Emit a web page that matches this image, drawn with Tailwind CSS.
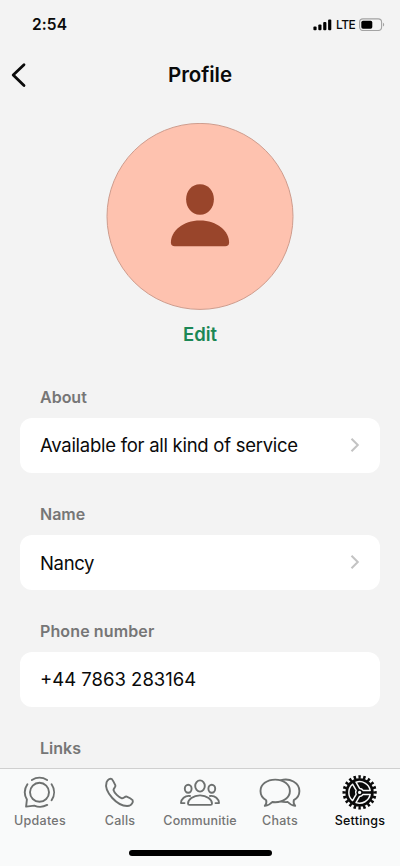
<!DOCTYPE html>
<html lang="en">
<head>
<meta charset="utf-8">
<title>Profile</title>
<script src="https://cdn.jsdelivr.net/npm/@tailwindcss/browser@4"></script>
</head>
<body class="bg-[#f3f3f3] text-[#0a0a0a] font-['Inter','Liberation_Sans',sans-serif]">
<div class="flex h-[866px] w-[400px] flex-col overflow-hidden">
  <header class="flex h-[49px] shrink-0 items-center justify-between pr-[15px] pl-8">
    <span class="text-[15.5px] leading-5 font-semibold tracking-[0.1px]">2:54</span>
    <div class="flex items-center gap-1">
      <svg class="h-3 w-[19px]" viewBox="0 0 19 12"><rect x="0.4" y="7.6" width="3.2" height="3.7" rx="1"/><rect x="5.3" y="5.6" width="3.2" height="5.7" rx="1"/><rect x="10.2" y="3" width="3.2" height="8.3" rx="1"/><rect x="15.1" y="0.5" width="3.2" height="10.8" rx="1"/></svg>
      <span class="w-[19px] text-[12px] leading-4 font-medium tracking-[-0.5px]">LTE</span>
      <svg class="h-[13px] w-[26px]" viewBox="0 0 26 13" fill="none"><rect x="0.6" y="0.9" width="22" height="11.6" rx="3.4" stroke="#a3a3a3" stroke-width="1.1"/><rect x="2.3" y="2.7" width="11" height="8" rx="1.7" fill="#000"/><path d="M24 4.8c1.6.7 1.6 3.1 0 3.8z" fill="#a3a3a3"/></svg>
    </div>
  </header>
  <nav class="grid h-[52px] shrink-0 grid-cols-3 items-center px-2.5">
    <svg class="h-[26px] w-[18px]" viewBox="0 0 18 26" fill="none" stroke="#0a0a0a" stroke-width="2.8" stroke-linecap="round" stroke-linejoin="round"><path d="M14 2.8 3.2 13 14 23.6"/></svg>
    <h1 class="text-center text-[20.5px] leading-6 font-semibold tracking-[-0.05px]">Profile</h1>
  </nav>
  <section class="flex shrink-0 flex-col items-center pt-[22px]">
    <svg class="h-[188px] w-[188px]" viewBox="0 0 188 188"><circle cx="94" cy="93.4" r="93" fill="#fec2af" stroke="#ce9c8d" stroke-width="1"/><g fill="#99452b" transform="translate(.5 .2)"><path d="M93.5 61C102 61 107.4 67.8 107.4 76S102 91.6 93.5 91.6 79.6 84.2 79.6 76 85 61 93.5 61z"/><path d="M93.5 97.4C110.5 97.4 122.6 108 122.6 119.2Q122.6 123 118.7 123H68.3Q64.4 123 64.4 119.2C64.4 108 76.5 97.4 93.5 97.4z"/></g></svg>
    <button class="mt-[11px] text-[18.5px] leading-6 font-semibold text-[#1b8755]">Edit</button>
  </section>
  <main class="flex min-h-0 flex-1 flex-col overflow-hidden px-5 pt-[41px]">
    <h2 class="h-[30.5px] shrink-0 pl-5 text-[16px] leading-5 font-semibold text-[#767676]">About</h2>
    <div class="mb-[31.5px] flex h-[55px] shrink-0 items-center justify-between rounded-[12px] bg-white px-5"><span class="pt-0.5 text-[18.5px] tracking-[-0.27px]">Available for all kind of service</span><svg class="h-4 w-[10px]" viewBox="0 0 10 16" fill="none" stroke="#c3c3c3" stroke-width="2"><path d="m1.5 1.7 6.3 6.3-6.3 6.3"/></svg></div>
    <h2 class="h-[30.5px] shrink-0 pl-5 text-[16px] leading-5 font-semibold text-[#767676]">Name</h2>
    <div class="mb-[31.5px] flex h-[55px] shrink-0 items-center justify-between rounded-[12px] bg-white px-5"><span class="pt-[3px] text-[18.5px] tracking-[-0.35px]">Nancy</span><svg class="h-4 w-[10px]" viewBox="0 0 10 16" fill="none" stroke="#c3c3c3" stroke-width="2"><path d="m1.5 1.7 6.3 6.3-6.3 6.3"/></svg></div>
    <h2 class="h-[30.5px] shrink-0 pl-5 text-[16px] leading-5 font-semibold tracking-[0.12px] text-[#767676]">Phone number</h2>
    <div class="mb-[31.5px] flex h-[55px] shrink-0 items-center rounded-[12px] bg-white px-5"><span class="pt-0.5 text-[18.5px]">+44 7863 283164</span></div>
    <h2 class="shrink-0 pl-5 text-[16px] leading-5 font-semibold text-[#767676]">Links</h2>
  </main>
  <footer class="flex h-[98px] shrink-0 flex-col items-center border-t border-[#cfcfcf] bg-[#f9fafa]">
    <div class="grid h-[81px] w-full grid-cols-5 text-[12.5px] font-medium text-[#747474]">
      <div class="flex flex-col items-center pt-[5px]">
        <svg class="h-9 w-9" viewBox="-18 -18 36 36" fill="none" stroke="#6d706f" stroke-width="1.9" stroke-linecap="round" stroke-linejoin="round"><g transform="translate(-.5 .3)"><circle r="9.5"/><path d="M-7.6-12.3A14.5 14.5 0 0 1 7.6-12.3M12.1-8A14.2 14.2 0 0 1 12.1 8M7.7 12.6A14.6 14.6 0 0 1-5.2 13.3L-13.4 14.3-12.6 7.2A14.2 14.2 0 0 1-12.1-8"/></g></svg>
        <span class="mt-[3px] leading-4 tracking-[0.25px]">Updates</span>
      </div>
      <div class="flex flex-col items-center pt-[5px]">
        <svg class="h-9 w-9" viewBox="0 0 36 36" fill="none" stroke="#6d706f" stroke-width="1.9" stroke-linejoin="round"><path d="M5 7.5C6.2 5.3 8.4 3.3 10.2 4.4C11.6 6.2 12.8 8.5 13.8 10.7C14.4 12.5 11.9 13.7 11.9 15.4C12.6 18.3 17.1 22.7 20.3 23.7C22 23.9 23.3 21.5 25.1 22C27.5 23 29.6 24.2 31 25.5C32 27.7 29.8 30.6 27.4 31.2C21.6 32 15.1 28.2 10.7 23.4C6.6 18.8 3.2 12.8 5 7.5z" transform="translate(-.4 .6)"/></svg>
        <span class="mt-[3px] leading-4 tracking-[0.25px]">Calls</span>
      </div>
      <div class="flex flex-col items-center pt-[5px]">
        <svg class="h-9 w-[44px]" viewBox="0 0 44 36" fill="none" stroke="#6d706f" stroke-width="1.9" stroke-linecap="round" stroke-linejoin="round"><ellipse cx="22" cy="12" rx="4.8" ry="5.6"/><ellipse cx="10.2" cy="14.7" rx="3.4" ry="4"/><ellipse cx="33.8" cy="14.7" rx="3.4" ry="4"/><path d="M22 21.4C29 21.4 34 25.9 34 29.4Q34 30.9 32.5 30.9H11.5Q10 30.9 10 29.4C10 25.9 15 21.4 22 21.4zM12 22C7 21.2 3 25.2 3 29.1H6.5M32 22C37 21.2 41 25.2 41 29.1H37.5"/></svg>
        <span class="mt-[3px] leading-4 tracking-[0.15px]">Communitie</span>
      </div>
      <div class="flex flex-col items-center pt-[5px]">
        <svg class="h-9 w-[44px]" viewBox="0 0 44 36" fill="none" stroke="#6d706f" stroke-width="1.9" stroke-linejoin="round"><path d="M17.2 5.6C25.5 5.6 31.9 10.5 31.9 16.9S25.5 28.2 17.2 28.2L14.2 28C12.4 30.2 10 31.5 6.8 31.9C8.3 30.2 8.7 28.3 8.2 26.2C4.7 24.2 2.5 20.9 2.5 16.9C2.5 10.5 8.9 5.6 17.2 5.6z"/><path d="M22.5 6.3C31.8 3.4 41.4 8.8 41.4 17C41.4 21 39.2 24.3 35.8 26.2C35.3 28.3 35.7 30.2 37.2 31.9C34 31.5 31.7 30.2 29.8 28C27 28.3 24.5 28 22.5 27.4"/></svg>
        <span class="mt-[3px] leading-4 tracking-[0.25px]">Chats</span>
      </div>
      <div class="flex flex-col items-center pt-[5px] text-[#0a0a0a]">
        <svg class="h-9 w-9" viewBox="-18 -18 36 36"><g transform="translate(-.4 .4)"><circle r="14.2" fill="#0a0a0a"/><circle r="15.4" fill="none" stroke="#0a0a0a" stroke-width="3.4" pathLength="80" stroke-dasharray="2 2" stroke-dashoffset="1"/><g fill="none" stroke="#f9fafa" stroke-width="1.5" stroke-linejoin="round"><path d="M3.46 2 7.03 8.18A10.8 10.8 0 0 0 7.03-8.18L3.46-2A4 4 0 0 1 3.46 2z" transform="rotate(60)"/><path d="M3.46 2 7.03 8.18A10.8 10.8 0 0 0 7.03-8.18L3.46-2A4 4 0 0 1 3.46 2z" transform="rotate(180)"/><path d="M3.46 2 7.03 8.18A10.8 10.8 0 0 0 7.03-8.18L3.46-2A4 4 0 0 1 3.46 2z" transform="rotate(300)"/></g><circle r="1.6" fill="#f9fafa"/></g></svg>
        <span class="mt-[3px] leading-4 tracking-[0.25px]">Settings</span>
      </div>
    </div>
    <div class="h-[6px] w-[143px] rounded-full bg-black"></div>
  </footer>
</div>
</body>
</html>
